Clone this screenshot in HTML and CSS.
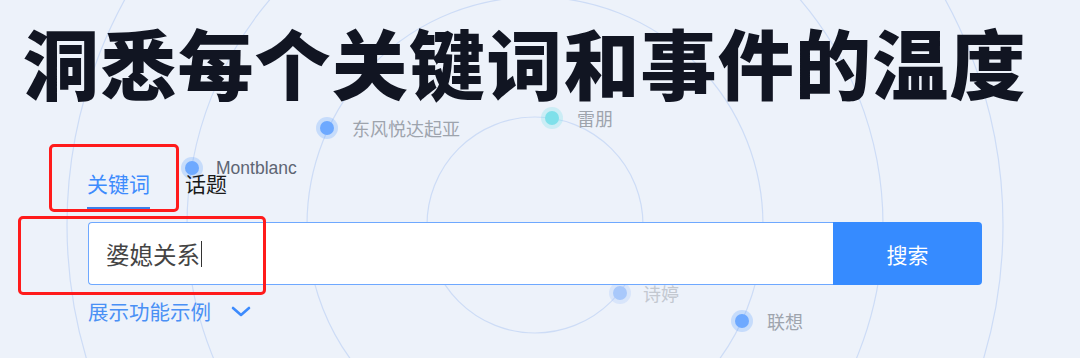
FILE: index.html
```html
<!DOCTYPE html>
<html lang="zh-CN">
<head>
    <meta charset="UTF-8">
    <meta name="viewport" content="width=device-width, initial-scale=1.0">
    <title>关键词温度</title>
    <link rel="stylesheet" href="styles.css">
</head>
<body>
    <div class="hero">
        <svg class="orbits" width="1080" height="358" viewBox="0 0 1080 358">
            <g class="rings">
                <circle cx="535" cy="225" r="108"></circle>
                <circle cx="535" cy="225" r="228"></circle>
                <circle cx="535" cy="225" r="348"></circle>
                <circle cx="535" cy="225" r="468"></circle>
            </g>
            <g class="node">
                <circle class="halo" cx="327" cy="128" r="11"></circle>
                <circle class="core" cx="327" cy="128" r="7"></circle>
                <text x="352" y="136">东风悦达起亚</text>
            </g>
            <g class="node node-dark">
                <circle class="halo" cx="192" cy="168" r="11"></circle>
                <circle class="core" cx="192" cy="168" r="7"></circle>
                <text x="216" y="174">Montblanc</text>
            </g>
            <g class="node node-cyan">
                <circle class="halo" cx="552" cy="118" r="11"></circle>
                <circle class="core" cx="552" cy="118" r="7"></circle>
                <text x="577" y="126">雷朋</text>
            </g>
            <g class="node node-faded">
                <circle class="halo" cx="620" cy="293" r="11"></circle>
                <circle class="core" cx="620" cy="293" r="7"></circle>
                <text x="643" y="301">诗婷</text>
            </g>
            <g class="node">
                <circle class="halo" cx="742" cy="321" r="11"></circle>
                <circle class="core" cx="742" cy="321" r="7"></circle>
                <text x="767" y="329">联想</text>
            </g>
        </svg>

        <h1 class="title">洞悉每个关键词和事件的温度</h1>

        <div class="tabs">
            <span class="tab active">关键词</span>
            <span class="tab">话题</span>
        </div>

        <div class="search">
            <div class="search-input">婆媳关系<span class="caret"></span></div>
            <button class="search-btn">搜索</button>
        </div>

        <a class="examples" href="#">
            展示功能示例
            <svg class="chevron" width="20" height="11" viewBox="0 0 20 11">
                <path d="M2 2 L10 9 L18 2"></path>
            </svg>
        </a>

        <!-- annotation boxes -->
        <div class="mark mark-tab"></div>
        <div class="mark mark-input"></div>
    </div>
</body>
</html>
```

FILE: styles.css
```css
body { margin: 0; background: #edf2fa; font-family: "Noto Sans CJK SC", "Noto Sans", sans-serif; }
.hero { position: relative; width: 1080px; height: 358px; overflow: hidden; }
.orbits { position: absolute; top: 0; left: 0; z-index: 0; }
.rings circle { fill: none; stroke: #cddcf6; stroke-width: 1.2; }
.node .halo { fill: #6ea9ff; opacity: 0.3; }
.node .core { fill: #6ea9ff; }
.node text { font-family: "Noto Sans CJK SC", sans-serif; font-size: 18px; fill: #9ea4ad; }
.node-dark text { font-family: "Liberation Sans", "Noto Sans", sans-serif; font-size: 17.5px; fill: #5d6573; }
.node-cyan .halo, .node-cyan .core { fill: #7fe0ea; }
.node-faded .halo { fill: #a8c8fb; }
.node-faded .core { fill: #a8c8fb; }
.node-faded text { fill: #c3c8d0; }

.title { position: relative; margin: 23px 0 0; padding-left: 23px; font-size: 76px; line-height: 76px; font-weight: 900; letter-spacing: 1.2px; color: #111522; }

.tabs { position: relative; display: flex; gap: 35px; margin-top: 74px; padding-left: 87px; }
.tab { font-size: 21px; line-height: 20px; color: #1a1a1a; padding-bottom: 14px; }
.tab.active { color: #3d8bfd; border-bottom: 3px solid #3d7fe8; }

.search { position: relative; display: flex; margin: 12px 0 0 88px; width: 894px; height: 63px; }
.search-input { flex: 1; display: flex; align-items: center; padding-left: 17px; background: #fff; border: 1px solid #6ea8ff; border-right: none; border-radius: 4px 0 0 4px; font-size: 23.5px; color: #444; }
.caret { width: 1px; height: 26px; margin-left: 1px; background: #333; }
.search-btn { width: 149px; border: none; border-radius: 0 4px 4px 0; background: #368bff; color: #fff; font-family: inherit; font-size: 21px; }

.examples { position: relative; display: inline-flex; align-items: center; gap: 20px; margin: 14px 0 0 88px; font-size: 20.5px; line-height: 24px; color: #4a90f5; text-decoration: none; }
.chevron path { fill: none; stroke: #3d8bfd; stroke-width: 2.6; stroke-linecap: round; stroke-linejoin: round; }

.mark { position: absolute; border: 3px solid #ff1b1b; border-radius: 5px; }
.mark-tab { left: 49px; top: 144px; width: 124px; height: 62px; }
.mark-input { left: 18px; top: 216px; width: 242px; height: 73px; }
```
